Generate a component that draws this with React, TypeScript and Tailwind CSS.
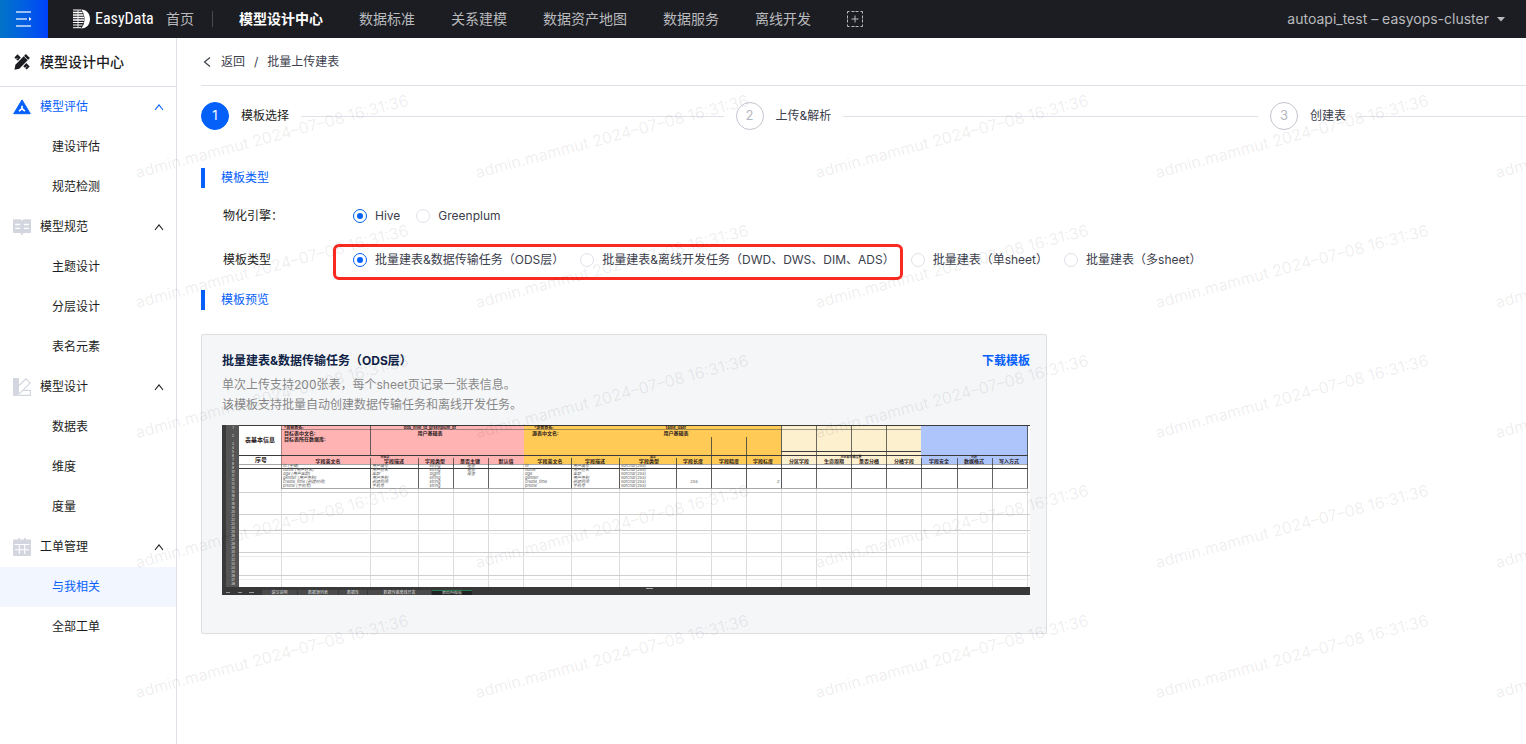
import { Fragment, useState } from "react";

const topNav = ["模型设计中心", "数据标准", "关系建模", "数据资产地图", "数据服务", "离线开发"];

const menu = [
  { title: "模型评估", icon: "assess", active: true, items: ["建设评估", "规范检测"] },
  { title: "模型规范", icon: "book", items: ["主题设计", "分层设计", "表名元素"] },
  { title: "模型设计", icon: "design", items: ["数据表", "维度", "度量"] },
  { title: "工单管理", icon: "ticket", items: ["与我相关", "全部工单"] },
];

const currentItem = "与我相关";

const steps = ["模板选择", "上传&解析", "创建表"];

const engines = ["Hive", "Greenplum"];

const templates = [
  "批量建表&数据传输任务（ODS层）",
  "批量建表&离线开发任务（DWD、DWS、DIM、ADS）",
  "批量建表（单sheet）",
  "批量建表（多sheet）",
];

function MenuIcon({ name }: { name: string }) {
  if (name === "assess") {
    return (
      <svg viewBox="0 0 18 18" className="w-[18px] h-[18px] shrink-0" aria-hidden="true">
        <path d="M9 1.900 17.300 15.700H.7Z" fill="#0560fa" stroke="#0560fa" strokeWidth="1" strokeLinejoin="round" />
        <path d="M9 7.800V11M9 10.700l-3 2.500M9 10.700l3 2.500" stroke="#fff" strokeWidth="1.700" fill="none" />
      </svg>
    );
  }
  if (name === "book") {
    return (
      <svg viewBox="0 0 18 18" className="w-[18px] h-[18px] shrink-0" aria-hidden="true">
        <path d="M1 1.300h6.200L9 2.600l1.800-1.300H17a1 1 0 0 1 1 1v11.700a1 1 0 0 1-1 1h-6.500L9 17.500 7.500 15H1a1 1 0 0 1-1-1V2.300a1 1 0 0 1 1-1Z" fill="#d3d5df" />
        <path d="M2.200 6.500h5M2.200 10.300h5M10.800 6.500h5M10.800 10.300h5" stroke="#fff" strokeWidth="1.300" />
      </svg>
    );
  }
  if (name === "design") {
    return (
      <svg viewBox="0 0 18 18" className="w-[18px] h-[18px] shrink-0" aria-hidden="true">
        <path d="M0 0h6v15.500L4 18H1.500A1.500 1.500 0 0 1 0 16.500Z" fill="#d3d5df" />
        <path d="M6 7.500 13 .9 17.200 5 6 16.200M9.800 12.300h7.600v5H4.500" fill="none" stroke="#d3d5df" strokeWidth="1.200" />
      </svg>
    );
  }
  return (
    <svg viewBox="0 0 18 18" className="w-[18px] h-[18px] shrink-0" aria-hidden="true">
      <path d="M1 1.500h16a1 1 0 0 1 1 1V17a1 1 0 0 1-1 1H1a1 1 0 0 1-1-1V2.500a1 1 0 0 1 1-1Z" fill="#d3d5df" />
      <path d="M6 0v3M12 0v3" stroke="#d3d5df" strokeWidth="1.800" />
      <path d="M1.500 6.500h15M2 11.800h14M6.300 7v9M11.700 7v9" stroke="#fff" strokeWidth="1.100" />
    </svg>
  );
}

function Header() {
  return (
    <header className="flex items-center h-[38px] bg-[#1c1d22] text-sm text-[#b9babd]">
      <button
        aria-label="菜单"
        className="flex items-center justify-center w-12 h-full shrink-0 bg-linear-to-r from-[#0473c8] to-[#0040fa]"
      >
        <svg viewBox="0 0 16 16" className="w-4 h-4 -mt-px" aria-hidden="true">
          <path d="M0 1h15M0 8h11M0 15h15" stroke="#fff" strokeOpacity=".8" strokeWidth="1.600" />
          <path d="M13 6 15.500 8 13 10Z" fill="#fff" />
        </svg>
      </button>
      <a href="#" className="flex items-center gap-1 ml-6 text-white">
        <svg viewBox="0 0 19 20" className="w-[19px] h-5" aria-hidden="true">
          <path d="M9 .5c6 0 9 4.500 9 9.500s-3 9.500-9 9.500c2.500-2.500 3.500-6 3.500-9.500S11.500 3 9 .5Z" fill="#fff" />
          <path d="M1 1h8M1 13.500h10.500M1 16h9.500M1 18.700h8" stroke="#fff" strokeWidth="1" />
          <path d="M1 3.500h9.500M1 6h10.500M1 8.500h11M1 11h11" stroke="#fff" strokeWidth="1.500" />
          <path d="M6 1v18" stroke="#fff" strokeOpacity=".4" strokeWidth="2" />
        </svg>
        <span className="w-[57px] font-['Liberation_Sans_Narrow','Roboto_Condensed',sans-serif] text-base leading-5">EasyData</span>
      </a>
      <a href="#" className="ml-[14px]">首页</a>
      <span className="w-px h-4 ml-[18px] bg-[#4a4b50]" />
      <nav className="flex items-center gap-9 ml-[26px]">
        {topNav.map((item, i) => (
          <a key={item} href="#" className={i === 0 ? "font-bold text-white" : ""}>
            {item}
          </a>
        ))}
        <button aria-label="添加">
          <svg viewBox="0 0 16 16" className="block w-4 h-4" fill="none" stroke="#b9babd" aria-hidden="true">
            <path d="M2.500.5h-2v2M13.500.5h2v2M2.500 15.500h-2v-2M13.500 15.500h2v-2" />
            <path d="M4.500.5h3M8.500.5h3M4.500 15.500h3M8.500 15.500h3M.5 4.500v3M.5 8.500v3M15.500 4.500v3M15.500 8.500v3" />
            <path d="M8 4.500v7M4.500 8h7" />
          </svg>
        </button>
      </nav>
      <button className="flex items-center gap-2 ml-auto mr-[21px]">
        autoapi_test – easyops-cluster
        <svg viewBox="0 0 8 5" className="w-2 h-[5px]" aria-hidden="true">
          <path d="M0 0h8L4 4.500Z" fill="#b9babd" />
        </svg>
      </button>
    </header>
  );
}

function Sidebar() {
  return (
    <aside className="w-[177px] shrink-0 border-r border-[#dfe0e8]">
      <h1 className="flex items-center gap-[9px] h-[49px] pl-[13px] border-b border-[#dfe0e8] text-sm font-medium text-[#1c1d22]">
        <svg viewBox="0 0 18 18" className="w-[18px] h-[18px]" aria-hidden="true">
          <path d="m4.500 1.300 3.300 3.300-3 3.200L1.400 4.500Z" fill="#1c1d22" />
          <path d="m13.300 10 3.400 3.500-3 3.100-3.400-3.300Z" fill="#1c1d22" />
          <path d="m12.900 1 4 4L6.300 15.700l-4.800 1 .9-4.900Z" fill="#1c1d22" />
          <path d="m10.900 3.100 3.900 3.900" stroke="#fff" strokeWidth=".8" />
          <path d="m3.300 6.200 1.300-1.300M12.300 14.800l1.300-1.300" stroke="#fff" strokeWidth=".8" />
        </svg>
        模型设计中心
      </h1>
      <nav className="text-xs text-[#1c1d22]">
        {menu.map((group) => (
          <Fragment key={group.title}>
            <button
              className={`flex items-center w-full h-10 pl-[13px] pr-3 ${group.active ? "text-[#0560fa]" : ""}`}
            >
              <MenuIcon name={group.icon} />
              <span className="ml-[9px] mr-auto">{group.title}</span>
              <svg viewBox="0 0 10 8" className="w-[10px] h-2" fill="none" stroke="currentColor" aria-hidden="true">
                <path d="M1 7 5 2l4 5" strokeWidth="1.100" />
              </svg>
            </button>
            {group.items.map((item) => (
              <a
                key={item}
                href="#"
                className={`flex items-center h-10 pl-[52px] ${item === currentItem ? "bg-[#f1f6ff] text-[#0560fa]" : ""}`}
              >
                {item}
              </a>
            ))}
          </Fragment>
        ))}
      </nav>
    </aside>
  );
}

function Steps() {
  return (
    <ol className="grid grid-cols-[1fr_1fr_256px] gap-3 py-4">
      {steps.map((step, i) => (
        <li key={step} className="flex items-center gap-3">
          <span
            className={`flex items-center justify-center w-7 h-7 rounded-full border text-[13px] ${
              i === 0 ? "bg-[#0560fa] border-[#0560fa] text-white" : "border-[#c3c5cf] text-[#b4b6c0]"
            }`}
          >
            {i + 1}
          </span>
          <span className={i === 0 ? "text-[#1c1d22]" : ""}>{step}</span>
          <span className="flex-1 h-px bg-[#dfe0e8]" />
        </li>
      ))}
    </ol>
  );
}

function SectionTitle({ children }: { children: string }) {
  return <h2 className="pl-4 border-l-4 border-[#0560fa] leading-5 text-[#0560fa]">{children}</h2>;
}

type RadioProps = { name: string; label: string; checked: boolean; onChange: () => void };

function Radio({ name, label, checked, onChange }: RadioProps) {
  return (
    <label className="flex items-center gap-2 whitespace-nowrap">
      <input
        type="radio"
        name={name}
        checked={checked}
        onChange={onChange}
        className="appearance-none w-[14px] h-[14px] rounded-full border border-[#dfe0e8] bg-white bg-clip-content p-[3px] checked:border-[#0560fa] checked:bg-[#0560fa]"
      />
      {label}
    </label>
  );
}

const headCells: [number, string][] = [
  [106, "字段英文名"], [172, "字段描述"], [213, "字段类型"], [248, "是否主键"], [284, "默认值"],
  [328, "字段英文名"], [373, "字段描述"], [427, "字段类型"], [471, "字段长度"], [507, "字段精度"],
  [541, "字段标度"], [577, "分区字段"], [612, "生命周期"], [647, "是否分桶"], [682, "分桶字段"],
  [717, "字段安全"], [752, "数据格式"], [787, "写入方式"],
];

const bodyRows = [
  ["id (主键)", "用户编号", "string", "是否"],
  ["name (用户姓名)", "用户姓名", "string", "是否"],
  ["age (用户年龄)", "年龄", "bigint", "是否"],
  ["gender (用户性别)", "用户性别", "string", ""],
  ["create_time (创建时间)", "创建时间", "string", ""],
  ["phone (手机号)", "手机号", "string", ""],
];

const sheetTabs: [number, number, string][] = [
  [40, 35, "填写说明"], [76, 40, "数据源列表"], [117, 28, "数据库"], [146, 63, "数据传输离线开发"], [210, 40, "表结构模板"],
];

function SheetPreview() {
  return (
    <svg viewBox="0 0 808 170" className="block w-full mt-[10px]" role="img" aria-label="模板预览">
      <rect width="808" height="170" fill="#fff" />
      <rect x="59" width="243" height="39" fill="#ffb3b3" />
      <rect x="302" width="257" height="39" fill="#ffcb56" />
      <rect x="559" width="140" height="39" fill="#fdf0cf" />
      <rect x="699" width="107" height="39" fill="#adc5fa" />

      <g stroke="#dcdcdc">
        {[59, 148, 196, 231, 266, 301, 349, 397, 454, 489, 524, 559, 594, 629, 664, 699, 735, 770, 805].map((x) => (
          <path key={x} d={`M${x + 0.5} 39V162`} />
        ))}
        {[67, 89, 105, 127, 150].map((y) => (
          <path key={y} d={`M17 ${y + 0.5}H808`} stroke="#cfcfcf" />
        ))}
        {[108, 131, 154].map((y) => (
          <path key={y} d={`M17 ${y + 0.5}H808`} stroke="#ebebeb" />
        ))}
      </g>

      <g stroke="#3b3b3b">
        <path d="M17 .5H808M17 30.500H806M559 26.500H699M17 43.500H806" />
        <path d="M148.500 0V30M148.500 33V63M196.500 33V63M231.500 33V63M266.500 33V63" strokeOpacity=".75" />
        <path d="M349.500 33V63M397.500 33V63M454.500 33V63M489.500 12V63M524.500 12V63M559.500 0V63" strokeOpacity=".8" />
        <path d="M594.500 0V63M629.500 0V63M664.500 0V63M699.500 33V63M735.500 33V63M770.500 33V63M805.500 0V63" strokeOpacity=".75" />
        <path d="M59 4.500H699M17 39.500H806M59 63.500H806M59.500 0V63" strokeOpacity=".45" />
      </g>

      <g fontSize="6" fill="#2a2020" fontWeight="bold">
        <text x="38" y="17" textAnchor="middle">表基本信息</text>
        <text x="39" y="37" textAnchor="middle">序号</text>
        <text x="62" y="4" fontSize="4">*目标表名:</text>
        <text x="62" y="10" fontSize="5">目标表中文名:</text>
        <text x="62" y="16" fontSize="5">目标表所在数据库:</text>
        <text x="208" y="4" fontSize="4" textAnchor="middle">ods_hive_to_greenplum_df</text>
        <text x="208" y="10" fontSize="5" textAnchor="middle">用户基础表</text>
        <text x="163" y="33" fontSize="3" textAnchor="middle">目标表</text>
        <text x="312" y="4" fontSize="4">*源表表名:</text>
        <text x="310" y="10" fontSize="5">源表中文名:</text>
        <text x="454" y="4" fontSize="4" textAnchor="middle">table_user</text>
        <text x="454" y="10" fontSize="5" textAnchor="middle">用户基础表</text>
        <text x="431" y="33" fontSize="3" textAnchor="middle">源表</text>
        <text x="629" y="33" fontSize="3" textAnchor="middle">分区和分桶设置</text>
        <text x="752" y="33" fontSize="3" textAnchor="middle">可选</text>
        {headCells.map(([x, text]) => (
          <text key={x} x={x} y="38" fontSize="5" textAnchor="middle">
            {text}
          </text>
        ))}
      </g>

      <g fontSize="4" fill="#555" fontStyle="italic">
        {bodyRows.map(([field, desc, type, key], i) => (
          <Fragment key={field}>
            <text x="61" y={42 + i * 4}>{field}</text>
            <text x="150" y={42 + i * 4}>{desc}</text>
            <text x="213" y={42 + i * 4} textAnchor="middle">{type}</text>
            <text x="249" y={42 + i * 4} textAnchor="middle">{key}</text>
            <text x="303" y={42 + i * 4}>{field.split(" ")[0]}</text>
            <text x="351" y={42 + i * 4}>{desc}</text>
            <text x="399" y={42 + i * 4}>varchar(255)</text>
          </Fragment>
        ))}
        <text x="472" y="58" textAnchor="middle">255</text>
        <text x="555" y="58">2</text>
      </g>

      <rect width="17" height="170" fill="#555" />
      <rect width="4" height="170" fill="#3a3a3a" />
      <g fontSize="3" fill="#e6e6e6" textAnchor="middle">
        {Array.from({ length: 38 }, (_, i) => (
          <text key={i} x="11" y={i === 0 ? 4 : i === 1 ? 12 : 12 + i * 4}>
            {i + 1}
          </text>
        ))}
      </g>

      <rect y="162" width="808" height="8" fill="#383838" />
      <path d="M424 163.500h7" stroke="#aaa" />
      {sheetTabs.map(([x, width, text], i) => (
        <Fragment key={text}>
          <rect x={x} y="165" width={width} height="5" fill={i === 4 ? "#222" : "#4a4a4a"} />
          <text x={x + width / 2} y="169" fontSize="4" fill="#ddd" textAnchor="middle">
            {text}
          </text>
        </Fragment>
      ))}
      <path d="M210 165.500h40" stroke="#217a4b" />
      <path d="M4 167.500h4M16 167.500h4M27 167.500h5" stroke="#999" />
    </svg>
  );
}

function Watermark() {
  return (
    <div
      aria-hidden="true"
      className="absolute top-[75px] bottom-0 left-[128px] right-0 overflow-hidden pointer-events-none grid grid-cols-[repeat(5,340px)] auto-rows-[130px]"
    >
      {Array.from({ length: 30 }, (_, i) => (
        <div key={i} className="flex items-center h-[122px] w-[288px] justify-center">
          <span className="-rotate-[15deg] whitespace-nowrap text-base text-black/8">
            admin.mammut 2024–07–08 16:31:36
          </span>
        </div>
      ))}
    </div>
  );
}

export default function App() {
  const [engine, setEngine] = useState(engines[0]);
  const [template, setTemplate] = useState(templates[0]);

  const templateRadio = (label: string) => (
    <Radio
      key={label}
      name="template"
      label={label}
      checked={template === label}
      onChange={() => setTemplate(label)}
    />
  );

  return (
    <div className="relative flex flex-col min-h-screen overflow-hidden bg-white font-[Inter,'Noto_Sans_CJK_SC',sans-serif]">
      <Header />
      <div className="flex flex-1">
        <Sidebar />
        <main className="flex-1 min-w-0 pl-6 text-xs text-[#3c404d]">
          <div className="flex items-center h-12 border-b border-[#dfe0e8]">
            <a href="#" className="flex items-center gap-2">
              <svg viewBox="0 0 12 12" className="w-3 h-3" fill="none" stroke="currentColor" aria-hidden="true">
                <path d="M9 1.500 3.500 6 9 10.500" strokeWidth="1.200" />
              </svg>
              返回
            </a>
            <span className="mx-[9px]">/</span>
            <span>批量上传建表</span>
          </div>

          <Steps />

          <div className="pt-[22px]">
            <SectionTitle>模板类型</SectionTitle>
          </div>

          <fieldset className="flex items-center h-5 mt-[18px] pl-[22px]">
            <legend className="float-left w-[130px] text-[#1c1d22]">物化引擎：</legend>
            <div className="flex gap-4">
              {engines.map((label) => (
                <Radio
                  key={label}
                  name="engine"
                  label={label}
                  checked={engine === label}
                  onChange={() => setEngine(label)}
                />
              ))}
            </div>
          </fieldset>

          <fieldset className="flex items-center h-5 mt-6 pl-[22px]">
            <legend className="float-left w-[130px] text-[#1c1d22]">模板类型</legend>
            <div className="flex gap-4">
              <div className="relative flex gap-4">
                {templates.slice(0, 2).map(templateRadio)}
                <span className="absolute -top-2 -bottom-3 -left-5 -right-2 border-[3px] border-[#fb2a20] rounded-md pointer-events-none" />
              </div>
              {templates.slice(2).map(templateRadio)}
            </div>
          </fieldset>

          <div className="pt-5">
            <SectionTitle>模板预览</SectionTitle>
          </div>

          <section className="max-w-[846px] mt-6 pt-4 px-4 pb-[38px] pl-5 border border-[#dfe0e3] rounded-xs bg-[#f5f6f8] leading-5">
            <div className="flex justify-between font-bold">
              <h3 className="text-[#0f1f45]">{templates[0]}</h3>
              <a href="#" className="text-[#0560fa]">下载模板</a>
            </div>
            <p className="mt-1 text-[#888]">单次上传支持200张表，每个sheet页记录一张表信息。</p>
            <p className="text-[#888]">该模板支持批量自动创建数据传输任务和离线开发任务。</p>
            <SheetPreview />
          </section>
        </main>
      </div>
      <Watermark />
    </div>
  );
}
